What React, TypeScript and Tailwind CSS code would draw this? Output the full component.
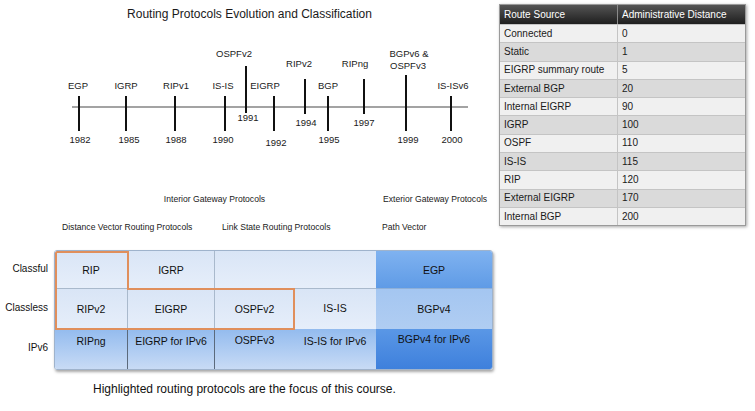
import React from "react";

const tableRows: [string, string][] = [
  ["Connected", "0"],
  ["Static", "1"],
  ["EIGRP summary route", "5"],
  ["External BGP", "20"],
  ["Internal EIGRP", "90"],
  ["IGRP", "100"],
  ["OSPF", "110"],
  ["IS-IS", "115"],
  ["RIP", "120"],
  ["External EIGRP", "170"],
  ["Internal BGP", "200"],
];

function Label({ x, y, children }: { x: number; y: number; children: React.ReactNode }) {
  return (
    <span
      className="absolute -translate-x-1/2 whitespace-nowrap text-[9.5px] leading-[12px] text-[#1a1a1a]"
      style={{ left: x, top: y }}
    >
      {children}
    </span>
  );
}

function Timeline() {
  const ticks: [number, number, number][] = [
    [79, 68, 103],
    [126, 68, 103],
    [175, 68, 103],
    [225, 68, 103],
    [246, 38, 85],
    [274, 68, 103],
    [305, 51, 86],
    [328, 68, 103],
    [364, 51, 86],
    [406, 47, 103],
    [451, 68, 103],
  ];
  const labels: [number, number, string][] = [
    [78, 52, "EGP"],
    [126, 52, "IGRP"],
    [176, 52, "RIPv1"],
    [223, 52, "IS-IS"],
    [234, 20, "OSPFv2"],
    [265, 52, "EIGRP"],
    [299, 30, "RIPv2"],
    [328, 52, "BGP"],
    [355, 30, "RIPng"],
    [409, 20, "BGPv6 &"],
    [408, 32, "OSPFv3"],
    [453, 52, "IS-ISv6"],
    [80, 106, "1982"],
    [129, 106, "1985"],
    [176, 106, "1988"],
    [223, 106, "1990"],
    [248, 84, "1991"],
    [276, 109, "1992"],
    [306, 89, "1994"],
    [329, 106, "1995"],
    [364, 89, "1997"],
    [408, 106, "1999"],
    [452, 106, "2000"],
  ];
  return (
    <div className="relative h-[124px] w-full">
      <svg className="absolute left-0 top-0" width="499" height="124">
        <line x1="72" y1="79" x2="468" y2="79" stroke="#a3a3a3" strokeWidth="2" />
        {ticks.map(([x, y1, y2], i) => (
          <line key={i} x1={x} y1={y1} x2={x} y2={y2} stroke="#111" strokeWidth="2" />
        ))}
      </svg>
      {labels.map(([x, y, t], i) => (
        <Label key={i} x={x} y={y}>
          {t}
        </Label>
      ))}
    </div>
  );
}

function Cell({
  children,
  className,
  textClass,
}: {
  children?: React.ReactNode;
  className: string;
  textClass?: string;
}) {
  return (
    <div className={`flex justify-center ${textClass ?? "items-center"} ${className}`}>
      <span className="whitespace-nowrap text-[10.5px] leading-[12px] text-[#111]">{children}</span>
    </div>
  );
}

function ProtocolGrid() {
  const light = "bg-gradient-to-b from-[#d9e5f6] to-[#e6eefa]";
  const ipv6 = "bg-gradient-to-b from-[#93bbee] to-[#c8dbf5]";
  return (
    <div className="flex">
      <div className="flex w-[54px] flex-col text-right text-[10px] leading-[12px] text-[#111]">
        <div className="flex h-[38px] items-center justify-end pr-[6px]">Classful</div>
        <div className="flex h-[40px] items-center justify-end pr-[6px]">Classless</div>
        <div className="flex h-[40px] items-center justify-end pr-[6px]">IPv6</div>
      </div>
      <div className="relative w-[439px] overflow-hidden rounded-[3px] border border-[#9fb3cc] shadow-[1px_2px_3px_rgba(0,0,0,0.35)]">
        <div className="grid grid-cols-[73px_87px_79px_82px_116px] grid-rows-[38px_40px_40px]">
          <Cell className={`${light} border-r border-b border-[#a9b9cc]`}>RIP</Cell>
          <Cell className={`${light} border-r border-b border-[#a9b9cc]`}>IGRP</Cell>
          <Cell className={`${light} col-span-2 border-b border-[#a9b9cc]`}></Cell>
          <Cell className="bg-gradient-to-b from-[#7fb2f0] to-[#5f9be6] border-b border-[#8fb0d8]">EGP</Cell>

          <Cell className={`${light} border-r border-[#a9b9cc]`}>RIPv2</Cell>
          <Cell className={`${light} border-r border-[#a9b9cc]`}>EIGRP</Cell>
          <Cell className={`${light}`}>OSPFv2</Cell>
          <Cell className={`${light}`} textClass="items-center pb-[3px]">IS-IS</Cell>
          <Cell className="bg-gradient-to-b from-[#a4c6f1] to-[#b0cdf2]">BGPv4</Cell>

          <Cell className={`${ipv6} border-r border-[#5b6a7c]`} textClass="items-start pt-[6px]">RIPng</Cell>
          <Cell className={`${ipv6} border-r border-[#5b6a7c]`} textClass="items-start pt-[6px]">EIGRP for IPv6</Cell>
          <Cell className={ipv6} textClass="items-start pt-[5px]">OSPFv3</Cell>
          <Cell className={ipv6} textClass="items-start pt-[6px]">IS-IS for IPv6</Cell>
          <Cell className="bg-gradient-to-b from-[#5a97e6] to-[#3e80dc]" textClass="items-start pt-[4px]">BGPv4 for IPv6</Cell>
        </div>
        <svg className="absolute left-0 top-0" width="439" height="118">
          <polyline
            points="1,1 73,1 73,38 239,38 239,78 1,78 1,1"
            fill="none"
            stroke="#e08f5c"
            strokeWidth="2"
          />
        </svg>
      </div>
    </div>
  );
}

function DistanceTable() {
  return (
    <div className="mt-[4px] w-[247px] border border-[#9a9a9a] shadow-[1px_1px_3px_rgba(0,0,0,0.35)]">
      <div className="flex h-[19px] bg-gradient-to-b from-[#555] to-[#1f1f1f] text-[10px] leading-[19px] text-white">
        <div className="w-[118px] border-r border-[#8a8a8a] pl-[4px]">Route Source</div>
        <div className="flex-1 pl-[4px]">Administrative Distance</div>
      </div>
      {tableRows.map(([a, b], i) => (
        <div
          key={a}
          className={`flex h-[18.3px] items-center border-t border-[#c4c4c4] text-[10px] leading-[12px] text-[#1a1a1a] ${
            i % 2 === 0 ? "bg-[#f0f0f0]" : "bg-[#dadada]"
          }`}
        >
          <div className="flex h-full w-[118px] items-center border-r border-[#c4c4c4] pl-[4px]">{a}</div>
          <div className="flex-1 pl-[4px]">{b}</div>
        </div>
      ))}
    </div>
  );
}

export default function App() {
  return (
    <div className="flex h-[411px] w-[755px] overflow-hidden bg-white font-['Liberation_Sans',Arial,sans-serif]">
      <div className="flex w-[499px] flex-col">
        <div className="h-[28px] pt-[7px] text-center text-[12px] leading-[14px] text-[#1a1a1a]">
          Routing Protocols Evolution and Classification
        </div>
        <Timeline />
        <div className="ml-[54px] mt-[42px] grid grid-cols-[73px_87px_79px_82px_118px] text-[8.6px] leading-[11px] text-[#1a1a1a]">
          <div className="col-span-4 text-center">Interior Gateway Protocols</div>
          <div className="whitespace-nowrap pl-[8px]">Exterior Gateway Protocols</div>
        </div>
        <div className="ml-[54px] mt-[17px] grid grid-cols-[73px_87px_79px_82px_118px] text-[8.6px] leading-[11px] text-[#1a1a1a]">
          <div className="col-span-2 whitespace-nowrap pl-[8px]">Distance Vector Routing Protocols</div>
          <div className="col-span-2 whitespace-nowrap pl-[8px]">Link State Routing Protocols</div>
          <div className="whitespace-nowrap pl-[7px]">Path Vector</div>
        </div>
        <div className="mt-[17px]">
          <ProtocolGrid />
        </div>
        <div className="ml-[93px] mt-[12px] text-[12px] leading-[14px] text-[#111]">
          Highlighted routing protocols are the focus of this course.
        </div>
      </div>
      <div className="flex-1">
        <DistanceTable />
      </div>
    </div>
  );
}
